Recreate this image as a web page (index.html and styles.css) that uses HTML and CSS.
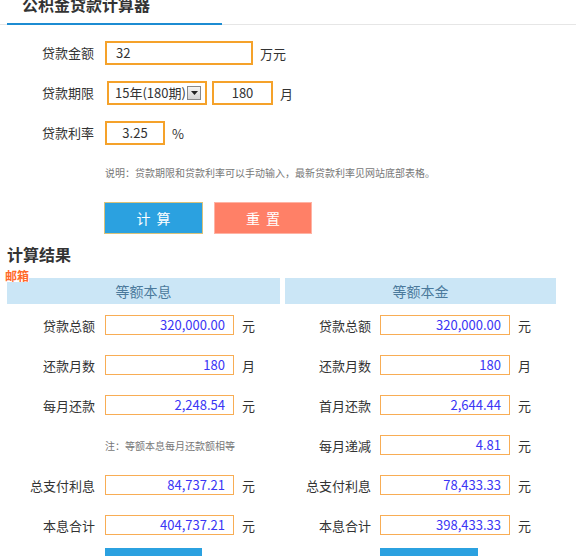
FILE: index.html
```html
<!DOCTYPE html>
<html lang="zh-CN">
<head>
<meta charset="utf-8">
<title>公积金贷款计算器</title>
<link rel="stylesheet" href="styles.css">
</head>
<body>
<div class="tabs"><div class="tab">公积金贷款计算器</div></div>

<div class="form">
  <div class="frow">
    <span class="flabel">贷款金额</span>
    <div class="finput amount">32</div>
    <span class="unit">万元</span>
  </div>
  <div class="frow">
    <span class="flabel">贷款期限</span>
    <div class="select">15年(180期)<span class="arrow"><svg width="7" height="4" viewBox="0 0 7 4"><path d="M0 0H7L3.5 4Z" fill="#222"/></svg></span></div>
    <div class="finput months">180</div>
    <span class="unit">月</span>
  </div>
  <div class="frow">
    <span class="flabel">贷款利率</span>
    <div class="finput rate">3.25</div>
    <span class="unit">%</span>
  </div>
  <p class="note">说明：贷款期限和贷款利率可以手动输入，最新贷款利率见网站底部表格。</p>
  <div class="btns">
    <button class="btn calc">计算</button>
    <button class="btn reset">重置</button>
  </div>
</div>

<div class="results">
  <h2 class="rtitle">计算结果</h2>
  <span class="badge">邮箱</span>
  <div class="cols">
    <div class="col left">
      <div class="chead">等额本息</div>
      <div class="rrow"><span class="rlabel">贷款总额</span><div class="rinput">320,000.00</div><span class="unit">元</span></div>
      <div class="rrow"><span class="rlabel">还款月数</span><div class="rinput">180</div><span class="unit">月</span></div>
      <div class="rrow"><span class="rlabel">每月还款</span><div class="rinput">2,248.54</div><span class="unit">元</span></div>
      <div class="rrow"><span class="rlabel"></span><span class="rnote">注：等额本息每月还款额相等</span></div>
      <div class="rrow"><span class="rlabel">总支付利息</span><div class="rinput">84,737.21</div><span class="unit">元</span></div>
      <div class="rrow"><span class="rlabel">本息合计</span><div class="rinput">404,737.21</div><span class="unit">元</span></div>
      <div class="rrow last"><span class="rlabel"></span><div class="rbtn"></div></div>
    </div>
    <div class="col right">
      <div class="chead">等额本金</div>
      <div class="rrow"><span class="rlabel">贷款总额</span><div class="rinput">320,000.00</div><span class="unit">元</span></div>
      <div class="rrow"><span class="rlabel">还款月数</span><div class="rinput">180</div><span class="unit">月</span></div>
      <div class="rrow"><span class="rlabel">首月还款</span><div class="rinput">2,644.44</div><span class="unit">元</span></div>
      <div class="rrow"><span class="rlabel">每月递减</span><div class="rinput">4.81</div><span class="unit">元</span></div>
      <div class="rrow"><span class="rlabel">总支付利息</span><div class="rinput">78,433.33</div><span class="unit">元</span></div>
      <div class="rrow"><span class="rlabel">本息合计</span><div class="rinput">398,433.33</div><span class="unit">元</span></div>
      <div class="rrow last"><span class="rlabel"></span><div class="rbtn"></div></div>
    </div>
  </div>
</div>
</body>
</html>
```

FILE: styles.css
```css
* { box-sizing: border-box; }
html, body { margin: 0; padding: 0; background: #fff; overflow: hidden; }
body {
  font-family: "Noto Sans CJK SC", "Noto Sans", sans-serif;
  font-size: 13px;
  color: #333;
  width: 576px;
  height: 556px;
}

.tabs {
  margin-top: -6px;
  border-bottom: 1px solid #e6e6e6;
  display: flex;
}
.tab {
  margin-left: 7px;
  width: 215px;
  padding-left: 15px;
  padding-bottom: 9px;
  font-size: 16px;
  font-weight: bold;
  line-height: 20px;
  color: #333;
  border-bottom: 2px solid #1c8cd2;
  margin-bottom: -1px;
}

.form { padding-top: 16px; }
.frow {
  display: flex;
  align-items: center;
  height: 24px;
  margin-bottom: 16px;
}
.flabel {
  width: 95px;
  text-align: right;
  padding-right: 1px;
  margin-right: 10px;
  line-height: 24px;
}
.finput, .select {
  height: 24px;
  border: 2px solid #f5a22a;
  line-height: 20px;
  font-size: 13px;
  color: #333;
}
.finput.amount { width: 148px; padding-left: 9px; }
.finput.months { width: 61px; text-align: center; margin-left: 5px; }
.finput.rate { width: 60px; text-align: center; }
.select {
  width: 100px;
  margin-left: 2px;
  padding-left: 6px;
  display: flex;
  align-items: center;
  justify-content: space-between;
  padding-right: 4px;
}
.arrow {
  width: 14px;
  height: 14px;
  border: 1px solid #888;
  background: linear-gradient(#f4f4f4, #d4d4d4);
  display: flex;
  align-items: center;
  justify-content: center;
}
.arrow svg { display: block; }
.unit { margin-left: 7px; }

.note {
  margin: 21px 0 0 105px;
  font-size: 10px;
  line-height: 14px;
  color: #777;
}
.btns {
  display: flex;
  gap: 11px;
  margin: 22px 0 0 104px;
}
.btn {
  width: 99px;
  height: 32px;
  font-family: inherit;
  font-size: 14px;
  letter-spacing: 6px;
  text-indent: 6px;
  color: #fff;
  padding: 0;
}
.btn.calc { background: #2ba1e0; border: 1px solid #d9c27a; }
.btn.reset { background: #ff8067; border: 1px solid #ffb3a4; width: 98px; }

.results { position: relative; }
.rtitle {
  margin: 10px 0 0 7px;
  font-size: 16px;
  line-height: 20px;
  font-weight: bold;
  color: #333;
}
.badge {
  position: absolute;
  left: 5px;
  top: 25px;
  font-size: 12px;
  line-height: 13px;
  font-weight: bold;
  color: #ff6a2a;
  background: #fff;
}
.cols {
  display: grid;
  grid-template-columns: 273px 271px;
  gap: 5px;
  margin: 14px 0 0 7px;
}
.chead {
  height: 26px;
  background: #cbe6f6;
  text-align: center;
  line-height: 26px;
  font-size: 14px;
  color: #4b7a9c;
  margin-bottom: 11px;
}
.rrow {
  display: flex;
  align-items: center;
  height: 20px;
  margin-bottom: 20px;
}
.rlabel {
  width: 88px;
  text-align: right;
  margin-right: 10px;
  white-space: nowrap;
}
.right .rlabel { width: 86px; margin-right: 9px; }
.rinput {
  width: 129px;
  height: 20px;
  border: 1px solid #f8ad55;
  text-align: right;
  padding-right: 8px;
  line-height: 18px;
  color: #3a35f5;
  font-size: 13px;
}
.right .rinput { width: 130px; }
.rrow .unit { margin-left: 8px; }
.rnote { font-size: 10px; color: #777; }
.rrow.last {
  margin-top: -7px;
  margin-bottom: 0;
  height: 8px;
  align-items: flex-start;
}
.rbtn {
  width: 97px;
  height: 8px;
  background: #2ba1e0;
  flex: none;
}
.right .rbtn { width: 98px; }
```
